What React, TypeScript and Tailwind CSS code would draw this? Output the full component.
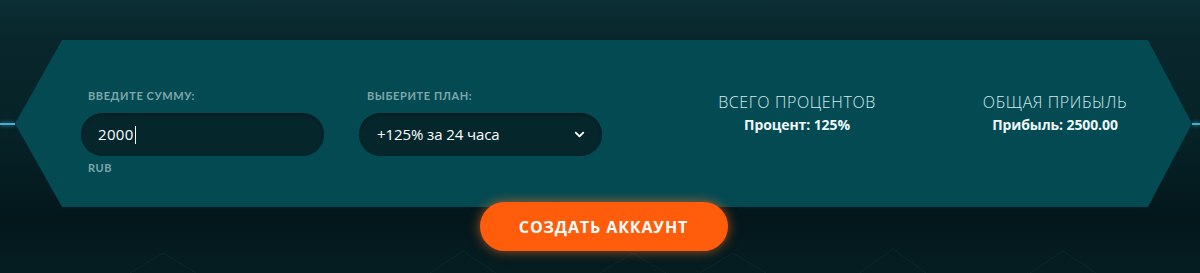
import {ChevronDown} from "lucide-react";

const Stat = ({title, value}: { title: string, value: string }) => (
  <div className="w-[200px] flex flex-col items-center pt-[52px]">
    <div className="text-[16px] leading-[20px] font-light text-[#d2ecef] font-['Open_Sans',sans-serif] tracking-[0.6px]">{title}</div>
    <div className="mt-[4px] text-[14px] leading-[18px] font-bold text-[#eef8f9] font-['Open_Sans',sans-serif] tracking-[-0.1px]">{value}</div>
  </div>
);

const App = () => {
  return (
    <div className="w-[1200px] h-[273px] overflow-hidden bg-[linear-gradient(180deg,#0c2f35_0%,#08262b_15%,#062227_50%,#03171b_80%,#051d21_100%)] relative">
      {/* faint hex pattern at the bottom */}
      <svg className="absolute left-0 bottom-0" width="1200" height="70" viewBox="0 0 1200 70">
        <g fill="none" stroke="#0d3035" strokeWidth="1" opacity="0.6">
          <path d="M130 70 L163 50 L196 70"/>
          <path d="M430 70 L463 48 L496 70"/>
          <path d="M600 70 L633 50 L666 70"/>
          <path d="M700 70 L733 50 L766 70"/>
          <path d="M860 70 L893 46 L926 70"/>
          <path d="M1030 70 L1063 48 L1096 70"/>
        </g>
      </svg>

      <div className="relative pt-[40px] flex items-center">
        <div className="w-[15px] h-[2px] bg-[#4fa9c9] shadow-[0_0_4px_#3b9ec4]"/>
        <div
          className="flex-1 h-[167px] bg-[#034a53] [clip-path:polygon(47px_0,calc(100%-44px)_0,100%_50%,calc(100%-44px)_100%,47px_100%,0_50%)] flex pl-[66px]">
          <div className="w-[243px] pt-[49px] flex flex-col">
            <div className="pl-[7px] text-[11px] leading-[14px] font-bold tracking-[0.6px] text-[#7ea7ab] font-['Lato',sans-serif]">ВВЕДИТЕ СУММУ:</div>
            <div className="mt-[10px] h-[43px] rounded-full bg-[#05272c] shadow-[inset_0_1px_3px_rgba(0,0,0,0.45)] flex items-center pl-[17px] text-[15px] text-white font-['Open_Sans',sans-serif] tracking-[0.3px]">
              2000<span className="ml-[1px] w-[1px] h-[18px] bg-white"/>
            </div>
            <div className="pl-[7px] mt-[5px] text-[11px] leading-[14px] font-bold tracking-[0.6px] text-[#7ea7ab] font-['Lato',sans-serif]">RUB</div>
          </div>

          <div className="ml-[35px] w-[243px] pt-[49px] flex flex-col">
            <div className="pl-[8px] text-[11px] leading-[14px] font-bold tracking-[0.6px] text-[#7ea7ab] font-['Lato',sans-serif]">ВЫБЕРИТЕ ПЛАН:</div>
            <div className="mt-[10px] h-[43px] rounded-full bg-[#05272c] shadow-[inset_0_1px_3px_rgba(0,0,0,0.45)] flex items-center justify-between pl-[18px] pr-[15px] text-[15px] text-white font-['Open_Sans',sans-serif] tracking-[-0.1px]">
              <span>+125% за 24 часа</span>
              <ChevronDown size={15} strokeWidth={3} className="text-white"/>
            </div>
          </div>

          <div className="ml-[95px] flex gap-[58px]">
            <Stat title="ВСЕГО ПРОЦЕНТОВ" value="Процент: 125%"/>
            <Stat title="ОБЩАЯ ПРИБЫЛЬ" value="Прибыль: 2500.00"/>
          </div>
        </div>
        <div className="w-[8px] h-[2px] bg-[#4fa9c9] shadow-[0_0_4px_#3b9ec4]"/>
      </div>

      <div className="relative -mt-[5px] pl-[15px] pr-[8px] flex justify-center">
        <button
          className="w-[248px] h-[49px] rounded-full bg-[#ff5c0c] shadow-[0_0_12px_rgba(255,110,30,0.65)] text-white text-[16px] font-bold tracking-[0.9px] font-['Open_Sans',sans-serif]">
          СОЗДАТЬ АККАУНТ
        </button>
      </div>
    </div>
  );
};

export default App;
